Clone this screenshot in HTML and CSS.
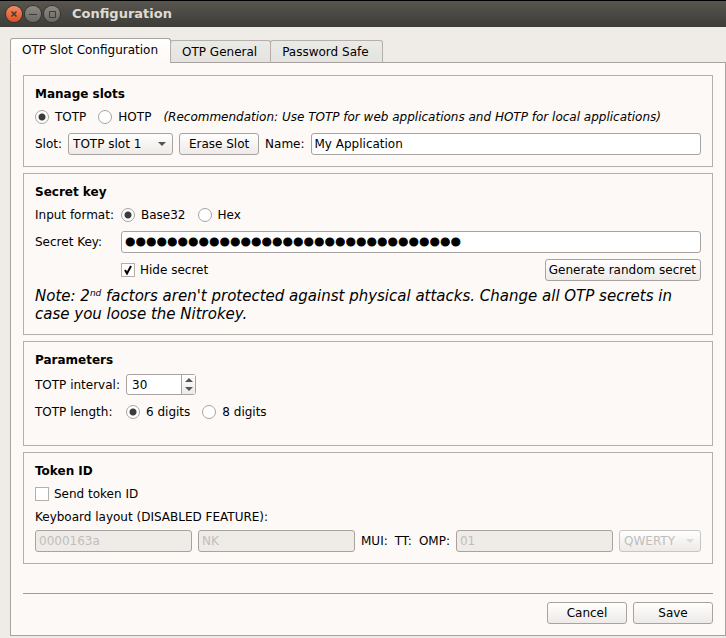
FILE: index.html
```html
<!DOCTYPE html>
<html lang="en">
<head>
<meta charset="utf-8">
<title>Configuration</title>
<meta name="viewport" content="width=device-width, initial-scale=1">
<link rel="stylesheet" href="styles.css">
</head>
<body>
<header class="titlebar">
  <button class="wm wm-close" type="button" aria-label="Close"><svg viewBox="0 0 16 16"><path d="M5.5 5.5l5 5M10.5 5.5l-5 5"/></svg></button>
  <button class="wm" type="button" aria-label="Minimize"><svg viewBox="0 0 16 16"><path d="M4 8.5h8"/></svg></button>
  <button class="wm" type="button" aria-label="Maximize"><svg viewBox="0 0 16 16"><path d="M5.5 5.5h6v6h-6z"/></svg></button>
  <h1 class="window-title">Configuration</h1>
</header>
<main class="window">
  <nav class="tabs" role="tablist">
    <button class="tab tab-active" type="button" role="tab" aria-selected="true">OTP Slot Configuration</button>
    <button class="tab" type="button" role="tab" aria-selected="false">OTP General</button>
    <button class="tab" type="button" role="tab" aria-selected="false">Password Safe</button>
  </nav>
  <form class="panel">
    <section class="group">
      <h2 class="heading">Manage slots</h2>
      <div class="row row-text">
        <label class="option"><input class="radio" type="radio" name="kind" checked>TOTP</label>
        <label class="option"><input class="radio" type="radio" name="kind">HOTP</label>
        <em>(Recommendation: Use TOTP for web applications and HOTP for local applications)</em>
      </div>
      <div class="row row-field">
        <label for="slot">Slot:</label>
        <span class="combo combo-slot"><select id="slot"><option>TOTP slot 1</option></select></span>
        <button class="button" type="button">Erase Slot</button>
        <label for="name">Name:</label>
        <input class="field" id="name" type="text" value="My Application">
      </div>
    </section>

    <section class="group">
      <h2 class="heading">Secret key</h2>
      <div class="form-row row-text">
        <span>Input format:</span>
        <div class="row">
          <label class="option"><input class="radio" type="radio" name="format" checked>Base32</label>
          <label class="option"><input class="radio" type="radio" name="format">Hex</label>
        </div>
      </div>
      <div class="form-row row-field">
        <label for="secret">Secret Key:</label>
        <input class="field secret" id="secret" type="password" value="ABCDEFGHIJKLMNOPQRSTUVWXYZ234567">
      </div>
      <div class="form-row row-next">
        <span></span>
        <div class="row row-split">
          <label class="option option-check"><input class="check" type="checkbox" checked><svg class="tick" viewBox="0 0 14 14"><path d="M4 7l2 3.5L10 3"/></svg>Hide secret</label>
          <button class="button button-tight" type="button">Generate random secret</button>
        </div>
      </div>
      <p class="note">Note: 2<sup>nd</sup> factors aren't protected against physical attacks. Change all OTP secrets in case you loose the Nitrokey.</p>
    </section>

    <section class="group group-params">
      <h2 class="heading">Parameters</h2>
      <div class="form-row form-params row-text">
        <label for="interval">TOTP interval:</label>
        <span class="spin"><input id="interval" type="number" value="30"><span class="steps"></span></span>
      </div>
      <div class="form-row form-params row-length">
        <span>TOTP length:</span>
        <div class="row">
          <label class="option"><input class="radio" type="radio" name="digits" checked>6 digits</label>
          <label class="option"><input class="radio" type="radio" name="digits">8 digits</label>
        </div>
      </div>
    </section>

    <section class="group">
      <h2 class="heading">Token ID</h2>
      <div class="row row-text">
        <label class="option option-check"><input class="check" type="checkbox"><svg class="tick" viewBox="0 0 14 14"><path d="M4 7l2 3.5L10 3"/></svg>Send token ID</label>
      </div>
      <div class="row row-text"><label for="layout">Keyboard layout (DISABLED FEATURE):</label></div>
      <div class="row row-token">
        <input class="field" type="text" value="0000163a" aria-label="Token" disabled>
        <input class="field" type="text" value="NK" aria-label="Manufacturer" disabled>
        <span class="row row-labels">
          <label for="mui">MUI:</label>
          <span>TT:</span>
          <span>OMP:</span>
        </span>
        <input class="field" id="mui" type="text" value="01" disabled>
        <span class="combo combo-off"><select id="layout" disabled><option>QWERTY</option></select></span>
      </div>
    </section>

    <footer class="actions">
      <button class="button" type="button">Cancel</button>
      <button class="button" type="submit">Save</button>
    </footer>
  </form>
</main>
</body>
</html>
```
FILE: styles.css
```css
* { box-sizing: border-box; }

body {
  margin: 0;
  background: #efebe7;
  color: #000;
  font: 12px/18px "DejaVu Sans", sans-serif;
}

button, input, select { font: inherit; color: inherit; margin: 0; }
h1, h2, p { margin: 0; }

.titlebar {
  display: flex;
  align-items: center;
  gap: 3px;
  height: 27px;
  padding-left: 6px;
  border-top: 1px solid #000;
  background: linear-gradient(#59564f, #3d3c37);
}
.wm {
  display: flex;
  width: 16px;
  height: 16px;
  padding: 0;
  border: 0;
  border-radius: 50%;
  background: linear-gradient(#8d8a83, #6b6963);
  box-shadow: 0 0 0 1px #35342f;
}
.wm-close { background: linear-gradient(#f58a66, #df4f20); }
.wm svg { width: 16px; height: 16px; fill: none; stroke: #3c3b37; }
.wm-close svg { stroke-width: 1.5; }
.window-title {
  margin-left: 9px;
  color: #dfdbd2;
  font: bold 13px/18px "DejaVu Sans", sans-serif;
}

.window { padding: 11px 0 2px 10px; }
.tabs { position: relative; z-index: 1; display: flex; align-items: flex-end; margin-bottom: -1px; }
.tab {
  height: 23px;
  margin-left: -1px;
  padding: 0 13px 0 11px;
  border: 1px solid #b4afab;
  border-bottom-color: #a8a3a0;
  border-radius: 3px 3px 0 0;
  background: linear-gradient(#eaeae7, #e4e3e0);
  line-height: 18px;
}
.tab-active {
  height: 25px;
  margin-left: 0;
  padding: 0 12px 1px 11px;
  border-color: #a8a3a0;
  border-bottom-color: #fdf9f6;
  background: linear-gradient(#fff, #fdf9f6);
}

.panel {
  display: flex;
  flex-direction: column;
  gap: 6px;
  padding: 12px 12px 11px;
  border: 1px solid #a8a3a0;
  background: #fdf9f6;
}
.group { padding: 9px 11px 11px; border: 1px solid #b4afab; }
.group-params { padding-bottom: 24px; }
.heading { font-size: 12px; line-height: 18px; font-weight: bold; }

.row { display: flex; align-items: center; gap: 6px; }
.row-text { margin-top: 5px; }
.row-field { margin-top: 7px; }
.row-next { margin-top: 6px; }
.row-length { margin-top: 8px; }
.row-token { margin-top: 4px; }
.row-labels { gap: 7px; }
.row-split { justify-content: space-between; }
.form-row {
  display: grid;
  grid-template-columns: 80px 1fr;
  column-gap: 6px;
  align-items: center;
}
.form-params { grid-template-columns: 85px 1fr; }

.option { position: relative; display: flex; align-items: center; gap: 6px; margin-right: 6px; }
.option-check { gap: 5px; }
.radio, .check {
  appearance: none;
  width: 14px;
  height: 14px;
  border: 1px solid #a8a3a0;
  background: #fff;
}
.radio { border-radius: 50%; }
.radio:checked { background: radial-gradient(circle, #3c3c3c 3px, #fff 4px); }
.check { border-color: #b4afab; }
.tick {
  display: none;
  position: absolute;
  left: 0;
  width: 14px;
  height: 14px;
  fill: none;
  stroke: #000;
  stroke-width: 2;
}
.check:checked + .tick { display: block; }

.button, .combo {
  height: 22px;
  border: 1px solid #a8a3a0;
  border-radius: 3px;
  background: linear-gradient(#fff, #edeae7);
}
.button { min-width: 80px; padding: 0 5px; line-height: 18px; white-space: nowrap; }
.button-tight { padding: 0 4px 0 3px; }

.combo { position: relative; }
.combo select {
  appearance: none;
  width: 100%;
  height: 20px;
  padding: 0 0 0 4px;
  border: 0;
  background: none;
}
.combo::after {
  content: "";
  position: absolute;
  right: 6px;
  top: 8px;
  border: 4px solid transparent;
  border-top-color: #555;
  border-bottom: 0;
  pointer-events: none;
}
.combo-slot { width: 105px; }
.combo-off { flex: none; width: 82px; border-color: #c9c5c2; }
.combo-off::after { border-top-color: #dcd9d7; }
.combo select:disabled { color: #bebebe; opacity: 1; }

.field {
  flex: 1;
  min-width: 0;
  height: 22px;
  padding: 0 3px;
  border: 1px solid #a8a3a0;
  border-radius: 3px;
  background: #fff;
}
.field:disabled { background: #efebe7; color: #bebebe; }
.secret { font: 30px/20px "Liberation Sans", sans-serif; -webkit-text-stroke: 1px #000; }

.note { margin-top: 6px; font-size: 15px; line-height: 18px; font-style: italic; }
.note sup { font-size: 9px; line-height: 0; vertical-align: 5px; }

.spin {
  display: flex;
  width: 70px;
  height: 21px;
  border: 1px solid #a8a3a0;
  border-radius: 3px;
  background: #fff;
}
.spin input {
  appearance: textfield;
  flex: 1;
  min-width: 0;
  padding: 0 5px;
  border: 0;
  background: none;
}
.spin input::-webkit-inner-spin-button { display: none; }
.steps {
  display: flex;
  flex-direction: column;
  align-items: center;
  justify-content: center;
  gap: 5px;
  width: 14px;
  border-left: 1px solid #a8a3a0;
  background: linear-gradient(#fff, #edeae7);
}
.steps::before, .steps::after { content: ""; border: 4px solid transparent; }
.steps::before { border-top: 0; border-bottom-color: #555; }
.steps::after { border-bottom: 0; border-top-color: #555; }

.actions {
  display: flex;
  justify-content: flex-end;
  gap: 6px;
  margin-top: 23px;
  padding-top: 8px;
  border-top: 1px solid #a09b98;
}
```
